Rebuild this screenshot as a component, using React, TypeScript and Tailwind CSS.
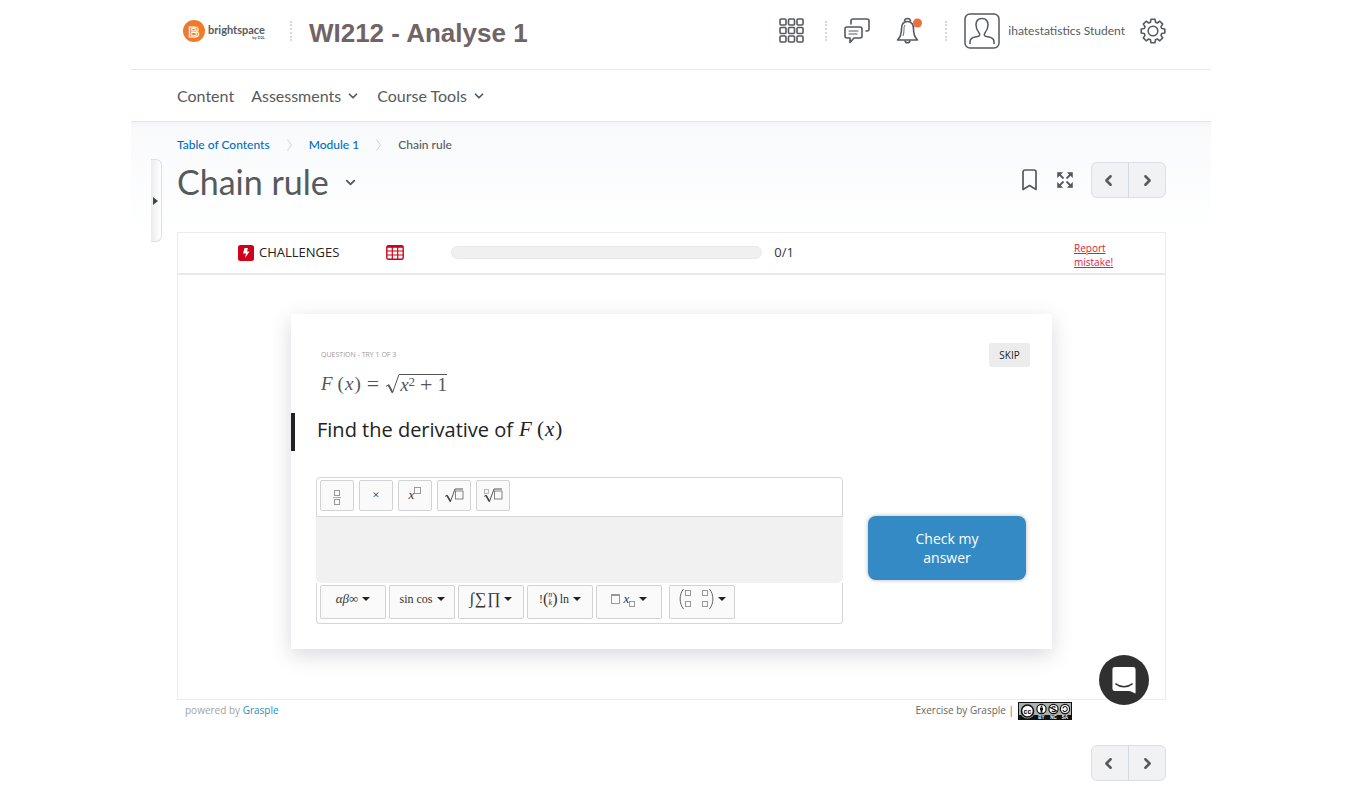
import type { ReactNode } from "react";
import { ChevronDown, ChevronLeft, ChevronRight } from "lucide-react";

const serif = "font-['Liberation_Serif',serif]";

function Dots() {
  return <span className="h-5 border-l-2 border-dotted border-[#d3d9e3]" />;
}

function Logo() {
  return (
    <a href="#home" className="flex items-center gap-[3px] text-[#565a5c]">
      <svg width="22" height="22" viewBox="0 0 22 22" aria-hidden="true">
        <circle cx="11" cy="11" r="11" fill="#f07a2b" />
        <text
          x="11"
          y="16.500"
          textAnchor="middle"
          fontSize="15"
          fontWeight="700"
          fontFamily="Liberation Sans, sans-serif"
          fill="#f07a2b"
          stroke="#fff"
          strokeWidth="1"
        >
          B
        </text>
      </svg>
      <span className="flex flex-col items-end pt-[2px]">
        <span className="text-[11px] leading-3 font-bold">brightspace</span>
        <span className="text-[4px] leading-1 font-bold">by D2L</span>
      </span>
    </a>
  );
}

function AppsIcon() {
  const cells = [1, 9.5, 18];
  return (
    <svg width="25" height="25" viewBox="0 0 25 25" fill="none" stroke="#565a5c" strokeWidth="1.6">
      {cells.map((y) => cells.map((x) => <rect key={`${x}-${y}`} x={x} y={y} width="6" height="6" rx="1" />))}
    </svg>
  );
}

function ChatIcon() {
  return (
    <svg width="26" height="26" viewBox="0 0 26 26" fill="none" stroke="#565a5c" strokeWidth="1.6" strokeLinejoin="round" strokeLinecap="round">
      <path d="M7 6V3a2 2 0 0 1 2-2h14a2 2 0 0 1 2 2v8a2 2 0 0 1-2 2h-1" />
      <path d="M3 9h13a2 2 0 0 1 2 2v7a2 2 0 0 1-2 2h-6l-4 4.500v-4.500H3a2 2 0 0 1-2-2v-7a2 2 0 0 1 2-2z" />
      <path d="M5 13h9M5 16h8" strokeWidth="1" />
    </svg>
  );
}

function BellIcon() {
  return (
    <svg width="27" height="27" viewBox="0 0 27 27" fill="none" stroke="#565a5c" strokeWidth="1.6" strokeLinejoin="round">
      <path d="M8.500 4.500a3 3 0 0 1 6 0" />
      <path d="M11.500 4.500c-4 0-6 3-6 7.500 0 5-1.500 8.500-4 11h20c-2.500-2.500-4-6-4-11 0-4.500-2-7.500-6-7.500z" />
      <path d="M9 23.500c.5 3 4.500 3 5 0" />
      <path d="M9 8c-1 1.500-1 3-1 5s-.3 4-1 6" strokeWidth="0.9" />
      <circle cx="21.500" cy="6" r="4.500" fill="#e87040" stroke="none" />
    </svg>
  );
}

function AvatarIcon() {
  return (
    <svg width="36" height="36" viewBox="0 0 36 36" fill="none" stroke="#565a5c" strokeWidth="1.5">
      <rect x="1" y="1" width="34" height="34" rx="5" />
      <path d="M6 31v-2c0-3 2-4.500 5-5l3.500-.8c1.300-.4 1.600-1.800.7-3C13 17.500 12 15 12 12c0-4 2.300-6.500 6-6.500s6 2.500 6 6.500c0 3-1 5.500-3.200 8.200-.9 1.200-.6 2.600.7 3l3.500.8c3 .5 5 2 5 5v2" />
    </svg>
  );
}

function GearIcon() {
  return (
    <svg width="26" height="26" viewBox="0 0 26 26" fill="none" stroke="#565a5c" strokeWidth="1.600" strokeLinejoin="round">
      <circle cx="13" cy="13" r="4.800" />
      <path d="M11 1.200h4l.5 3 1.800.8 2.500-1.800 2.900 2.900-1.700 2.500.7 1.900 3.100.5v4l-3.100.5-.7 1.900 1.700 2.500-2.900 2.900-2.500-1.800-1.800.8-.5 3h-4l-.5-3-1.800-.8-2.500 1.800-2.900-2.900L5 17.400l-.7-1.900-3.100-.5v-4l3.100-.5L5 8.600 3.300 6.100l2.900-2.900L8.700 5l1.800-.8z" />
    </svg>
  );
}

function ExpandIcon() {
  return (
    <svg width="16" height="16" viewBox="0 0 16 16" fill="#565a5c" stroke="#565a5c">
      {[0, 90, 180, 270].map((turn) => (
        <g key={turn} transform={`rotate(${turn} 8 8)`}>
          <path d="M.5.5h5l-5 5z" strokeWidth="0.600" strokeLinejoin="round" />
          <path d="M2.500 2.500l4 4" strokeWidth="1.800" />
        </g>
      ))}
    </svg>
  );
}

function Pager({ label }: { label: string }) {
  const button = "flex h-[34px] items-center justify-center";
  return (
    <div role="group" aria-label={label} className="flex rounded-md border border-[#d9dee8] bg-[#f1f2f4] text-[#565a5c]">
      <button type="button" aria-label="Previous" className={`${button} w-[37px] border-r border-[#d3dae6]`}>
        <ChevronLeft size={17} strokeWidth={3.5} className="-ml-1" />
      </button>
      <button type="button" aria-label="Next" className={`${button} w-9`}>
        <ChevronRight size={17} strokeWidth={3.5} />
      </button>
    </div>
  );
}

function Crumb() {
  return (
    <svg width="5" height="12" viewBox="0 0 5 12" fill="none" stroke="#cdd3dc" aria-hidden="true">
      <path d="M.5.5l4 5.500-4 5.500" />
    </svg>
  );
}

function Fx() {
  return (
    <span className="flex gap-[5px]">
      <i>F</i>
      <span className="flex gap-px">
        <span>(</span>
        <i>x</i>
        <span>)</span>
      </span>
    </span>
  );
}

function Box({ className }: { className: string }) {
  return <span className={`inline-block border border-[#999] ${className}`} />;
}

function Radical({ index }: { index?: boolean }) {
  return (
    <svg width="22" height="16" viewBox="0 0 22 16" fill="none" stroke="#444" strokeWidth="0.900">
      <path d="M2 9.500l2-1.300 3.500 6.300L12 2h8" />
      <path d="M4 8.500l3.500 6" strokeWidth="1.500" />
      <rect x="12.500" y="4" width="7.500" height="8" stroke="#777" />
      {index && <rect x="2.500" y="2.500" width="4" height="4" stroke="#aaa" strokeWidth="0.800" />}
    </svg>
  );
}

function Key({ label, children }: { label: string; children: ReactNode }) {
  return (
    <button
      type="button"
      aria-label={label}
      className="flex h-[31px] w-[34px] items-center justify-center rounded-xs border border-[#d2d2d2] bg-[#fafafa] pb-px"
    >
      {children}
    </button>
  );
}

function MenuKey({ label, children }: { label: string; children: ReactNode }) {
  return (
    <button
      type="button"
      aria-haspopup="menu"
      aria-label={label}
      className="flex h-[34px] w-[66px] items-center justify-center gap-1 rounded-xs border border-[#d2d2d2] bg-[#fafafa] pb-[6px]"
    >
      {children}
      <span className="border-x-4 border-t-4 border-x-transparent border-t-[#222]" />
    </button>
  );
}

function MathEditor() {
  return (
    <div className={`w-[527px] text-[13px] leading-4 text-[#333] ${serif}`}>
      <div className="flex h-10 gap-[5px] rounded-t border border-[#d6d6d6] px-[3px] pt-[2px]">
        <Key label="Fraction">
          <span className="flex flex-col items-center gap-px pt-1">
            <Box className="h-[6px] w-[6px]" />
            <span className="h-px w-2 bg-[#aaa]" />
            <Box className="h-[6px] w-[6px]" />
          </span>
        </Key>
        <Key label="Multiply">×</Key>
        <Key label="Power">
          <span className="flex">
            <i>x</i>
            <Box className="h-[7px] w-[7px]" />
          </span>
        </Key>
        <Key label="Square root">
          <Radical />
        </Key>
        <Key label="Nth root">
          <Radical index />
        </Key>
      </div>
      <textarea aria-label="Your answer" className="block h-[66px] w-full resize-none rounded-b-md bg-[#f1f1f1] p-2 outline-none" />
      <div className="flex h-[41px] gap-[3px] rounded-b border border-t-0 border-[#d6d6d6] px-[3px] pt-[2px]">
        <MenuKey label="Symbols">
          <span>
            <i>αβ</i>∞
          </span>
        </MenuKey>
        <MenuKey label="Trigonometry">
          <span className="text-[12px]">sin cos</span>
        </MenuKey>
        <MenuKey label="Integrals and sums">
          <span className="flex items-center gap-px text-[16px]">
            <i>∫</i>
            <span>∑</span>
            <span>∏</span>
          </span>
        </MenuKey>
        <MenuKey label="Combinatorics">
          <span className="flex items-center text-[12px]">
            !<span className="text-[16px]">(</span>
            <span className="flex flex-col text-[8px] leading-[8px] italic">
              <span>n</span>
              <span>k</span>
            </span>
            <span className="text-[16px]">)</span>
            <span className="pl-[2px]">ln</span>
          </span>
        </MenuKey>
        <MenuKey label="Accents and indices">
          <span className="flex items-center gap-1">
            <Box className="h-[10px] w-[9px] border-t-2" />
            <span className="flex items-end">
              <i>x</i>
              <Box className="h-[6px] w-[6px]" />
            </span>
          </span>
        </MenuKey>
        <div className="pl-1">
          <MenuKey label="Matrices">
            <svg width="35" height="22" viewBox="0 0 35 22" fill="none" stroke="#999">
              <path d="M4.500 1C0 6.500 0 15.500 4.500 21M30.500 1c4.500 5.500 4.500 14.500 0 20" stroke="#666" />
              <rect x="6.500" y="2.500" width="5" height="5" />
              <rect x="23.500" y="2.500" width="5" height="5" />
              <rect x="6.500" y="13.500" width="5" height="5" />
              <rect x="23.500" y="13.500" width="5" height="5" />
            </svg>
          </MenuKey>
        </div>
      </div>
    </div>
  );
}

function LicenseBadge() {
  return (
    <svg width="54" height="18" viewBox="0 0 54 18" role="img" aria-label="Creative Commons BY NC SA">
      <rect width="54" height="18" fill="#111" />
      <rect x="1" y="1" width="52" height="12" fill="#aab2ab" />
      <circle cx="9.500" cy="9" r="7.500" fill="#aab2ab" />
      <circle cx="9.500" cy="9" r="6" fill="#fff" stroke="#111" strokeWidth="1.600" />
      <text x="9.500" y="11.500" textAnchor="middle" fontSize="7" fontWeight="700" fontFamily="Liberation Sans, sans-serif">
        cc
      </text>
      <g fill="#fff" stroke="#111" strokeWidth="1.200">
        <circle cx="23.500" cy="7" r="4.600" />
        <circle cx="35.500" cy="7" r="4.600" />
        <circle cx="47" cy="7" r="4.600" />
      </g>
      <circle cx="23.500" cy="4.300" r="0.900" fill="#111" />
      <path d="M22 5.500h3v2.800h-.6v2.400h-1.800V8.300H22z" fill="#111" />
      <path d="M31.500 5l8 4.500M37.500 5.500c-1-1.300-3.500-1-3.500.3 0 1.600 3.500 1 3.500 2.700 0 1.400-2.500 1.500-3.700.4" fill="none" stroke="#111" strokeWidth="1.100" />
      <path d="M45 6.500c.3-3 4.300-2.500 4.300.5s-4 3.500-4.300 1" fill="none" stroke="#111" strokeWidth="1.100" />
      <g fill="#fff" fontSize="4.500" fontWeight="700" fontFamily="Liberation Sans, sans-serif" textAnchor="middle">
        <text x="23.500" y="17">BY</text>
        <text x="35.500" y="17">NC</text>
        <text x="47" y="17">SA</text>
      </g>
    </svg>
  );
}

function Question() {
  return (
    <section className="mx-auto mt-[39px] mb-[50px] max-w-[761px] bg-white pt-[29px] pb-[25px] text-[#222] shadow-[0_6px_20px_rgba(60,64,80,0.2)]">
      <div className="flex items-start justify-between pr-[22px] pl-[30px]">
        <div>
          <p className="pt-[7px] text-[7px] leading-[10px] text-[#999]">QUESTION - TRY 1 OF 3</p>
          <p className={`flex items-center pt-3 text-[19px] leading-6 text-[#555] ${serif}`}>
            <Fx />
            <span className="px-[6px] text-[22px]">=</span>
            <svg width="14" height="20" viewBox="0 0 14 20" fill="none" stroke="#555" aria-hidden="true">
              <path d="M1 12.500l2.500-1.800 4 8L14 .5" />
              <path d="M3.500 11l4 7.500" strokeWidth="1.800" />
            </svg>
            <span className="flex h-5 gap-[5px] border-t border-[#555] pl-px leading-5">
              <span className="flex">
                <i>x</i>
                <sup className="top-0 text-[13px] leading-[14px]">2</sup>
              </span>
              <span className="text-[22px]">+</span>
              <span>1</span>
            </span>
          </p>
        </div>
        <button type="button" className="h-6 w-[41px] rounded-xs bg-[#ececec] text-[10px] text-[#222]">
          SKIP
        </button>
      </div>
      <h2 className="mt-[17px] flex h-[38px] items-center gap-[6px] border-l-4 border-[#222] pb-1 pl-[22px] text-[20px]">
        Find the derivative of
        <span className={`text-[21px] ${serif}`}>
          <Fx />
        </span>
      </h2>
      <div className="mt-[26px] flex items-start justify-between pr-[26px] pl-[25px]">
        <MathEditor />
        <button
          type="button"
          className="mt-[39px] h-16 w-[158px] rounded-lg bg-[#338ac4] px-10 text-[14px] leading-[19px] font-medium text-white shadow-[0_0_4px_rgba(0,0,0,0.3)]"
        >
          Check my answer
        </button>
      </div>
    </section>
  );
}

export default function App() {
  return (
    <div className="bg-white pr-4 font-['Lato',sans-serif] text-[#565a5c]">
      <div className="mx-auto max-w-[1080px]">
        <header className="flex h-[70px] items-center border-b border-[#e6eaf0] pr-[45px] pb-2 pl-[52px]">
          <Logo />
          <div className="flex items-center gap-[17px] pl-[25px]">
            <Dots />
            <h1 className="pt-[6px] font-['Liberation_Sans',sans-serif] text-[26px] font-bold text-[#716467]">WI212 - Analyse 1</h1>
          </div>
          <div className="ml-auto flex items-center">
            <button type="button" aria-label="Select a course">
              <AppsIcon />
            </button>
            <span className="flex px-[17px] pl-[21px]">
              <Dots />
            </span>
            <button type="button" aria-label="Messages">
              <ChatIcon />
            </button>
            <button type="button" aria-label="Notifications" className="ml-[26px]">
              <BellIcon />
            </button>
            <span className="flex px-[17px] pl-[22px]">
              <Dots />
            </span>
            <button type="button" className="flex items-center gap-2 text-[12px]">
              <AvatarIcon />
              ihatestatistics Student
            </button>
            <button type="button" aria-label="Settings" className="ml-[15px]">
              <GearIcon />
            </button>
          </div>
        </header>

        <nav className="flex h-[52px] items-center gap-[17px] border-b border-[#e3e7ee] px-[46px] text-[16px]">
          <a href="#content">Content</a>
          <button type="button" className="flex items-center gap-[5px]">
            Assessments
            <ChevronDown size={14} strokeWidth={3} />
          </button>
          <button type="button" className="flex items-center gap-[5px]">
            Course Tools
            <ChevronDown size={14} strokeWidth={3} />
          </button>
        </nav>

        <main className="flex bg-[linear-gradient(#f2f4f7,#f8fafb_6px,#ffffff_112px)] pr-[45px] pl-5">
          <button
            type="button"
            aria-label="Open side panel"
            className="mt-[37px] mr-[15px] flex h-[83px] w-[11px] shrink-0 items-center rounded-r-md border border-l-0 border-[#dadfe8] bg-linear-to-r from-[#ececec] to-white pl-[2px]"
          >
            <span className="border-y-4 border-l-5 border-y-transparent border-l-[#444]" />
          </button>
          <div className="grow">
            <div className="flex items-center gap-[17px] pt-[14px] text-[12px] leading-[18px] font-medium">
              <a href="#toc" className="text-[#006fbf]">
                Table of Contents
              </a>
              <Crumb />
              <a href="#module-1" className="text-[#006fbf]">
                Module 1
              </a>
              <Crumb />
              <span>Chain rule</span>
            </div>
            <div className="flex h-[78px] items-start justify-between pt-2">
              <button type="button" className="flex items-center gap-[14px] text-[34px] leading-10">
                Chain rule
                <ChevronDown size={15} strokeWidth={3} />
              </button>
              <div className="flex items-center">
                <button type="button" aria-label="Bookmark">
                  <svg width="15" height="22" viewBox="0 0 15 22" fill="none" stroke="#565a5c" strokeWidth="1.700" strokeLinejoin="round">
                    <path d="M1 3a2 2 0 0 1 2-2h9a2 2 0 0 1 2 2v17.500l-6.500-4-6.500 4z" />
                  </svg>
                </button>
                <button type="button" aria-label="Full screen" className="mr-[18px] ml-5">
                  <ExpandIcon />
                </button>
                <Pager label="Topic navigation" />
              </div>
            </div>

            <div className="font-['Open_Sans','Noto_Sans',sans-serif]">
              <div className="relative border border-[#ececec] bg-white">
                <div className="flex h-[42px] items-center border-b-2 border-[#e9e9e9] pr-[51px] pb-px pl-[60px] text-[13px] text-[#333]">
                  <span className="flex items-center gap-[5px] text-[#222]">
                    <svg width="16" height="16" viewBox="0 0 16 16" aria-hidden="true">
                      <rect width="16" height="16" rx="2.500" fill="#d0021b" />
                      <path d="M6.500 3h3.500L9 6.500h2.500L7 13l1-4.500H5z" fill="#fff" />
                    </svg>
                    CHALLENGES
                  </span>
                  <button type="button" aria-label="Overview" className="ml-[47px]">
                    <svg width="18" height="15" viewBox="0 0 18 15" fill="none" stroke="#d0021b">
                      <rect x="0.800" y="0.800" width="16.400" height="13.400" rx="1.500" strokeWidth="1.400" />
                      <path d="M1 1.800h16" strokeWidth="2" />
                      <path d="M1 6h16M1 10h16M6.300 2v12M11.700 2v12" strokeWidth="1.200" />
                    </svg>
                  </button>
                  <div
                    role="progressbar"
                    aria-label="Progress"
                    aria-valuenow={0}
                    aria-valuemax={1}
                    className="mr-3 ml-[47px] h-[13px] grow rounded-full border border-[#e8e8e8] bg-[#f0f0f0]"
                  />
                  <span className="mr-[280px]">0/1</span>
                  <a href="#report" className="w-10 pt-1 text-[10px] leading-[14px] text-[#e0203a] underline">
                    Report mistake!
                  </a>
                </div>
                <Question />
                <button
                  type="button"
                  aria-label="Open chat"
                  className="absolute right-4 -bottom-[6px] flex size-[50px] items-center justify-center rounded-full bg-[#303030]"
                >
                  <svg width="24" height="27" viewBox="0 0 24 28" aria-hidden="true">
                    <path d="M2.500 0h19A2.500 2.500 0 0 1 24 2.500V27.500c-2.500-1-4.500-2.200-7-2.500H2.500A2.500 2.500 0 0 1 0 22.500v-20A2.500 2.500 0 0 1 2.500 0z" fill="#fff" />
                    <path d="M3.500 17.500c5 4 12 4 17 0" fill="none" stroke="#303030" strokeWidth="1.400" strokeLinecap="round" />
                  </svg>
                </button>
              </div>
              <footer className="flex items-center justify-between pt-[2px] pr-[94px] pl-2 text-[10px]">
                <p className="pb-[2px] text-[#a3a3a3]">
                  powered by{" "}
                  <a href="#grasple" className="text-[#338ac4]">
                    Grasple
                  </a>
                </p>
                <p className="flex items-center gap-1 text-[#666]">
                  <span className="pb-[2px]">Exercise by Grasple |</span>
                  <LicenseBadge />
                </p>
              </footer>
            </div>
            <div className="flex justify-end pt-[25px] pb-1">
              <Pager label="Topic navigation, bottom" />
            </div>
          </div>
        </main>
      </div>
    </div>
  );
}
